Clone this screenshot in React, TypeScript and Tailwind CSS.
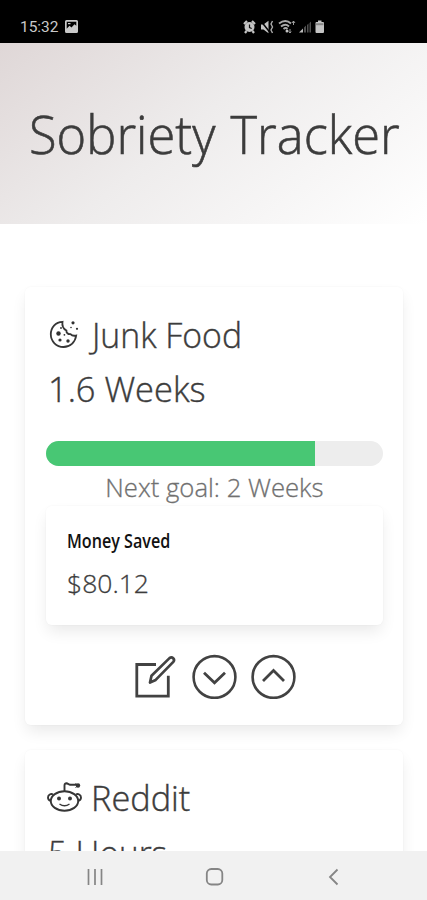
import type { ReactNode } from 'react';

const cardShadow = 'shadow-[0_8px_16px_-2px_rgba(10,10,10,0.09),0_0_0_1px_rgba(10,10,10,0.01)]';

function StatusBar() {
  return (
    <header className="flex h-[43px] shrink-0 bg-black pt-[19px] text-[#c9c9c9]">
      <div className="ml-[20px] w-[39px] whitespace-nowrap font-['Roboto',sans-serif] text-[15px] leading-4">
        <span className="inline-block origin-left scale-x-[1.03]">15:32</span>
      </div>
      <svg className="ml-[6px] mt-[1px] h-[13px] w-[13px]" viewBox="0 0 13 13">
        <path fill="#c9c9c9" fillRule="evenodd" d="M1.500 0h10A1.500 1.500 0 0 1 13 1.500v10a1.500 1.500 0 0 1-1.500 1.500h-10A1.500 1.500 0 0 1 0 11.500v-10A1.500 1.500 0 0 1 1.500 0zM1.700 1.700v7L4.500 5.800l2 1.600 3-3.200 1.800 1.500v-4z" />
        <path fill="#c9c9c9" d="M3 3h2.500v1.200H3z" />
      </svg>
      <svg className="ml-[165px] h-[16px] w-[82px]" viewBox="243 19 82 16" fill="#c4c4c4">
        <circle cx="249.500" cy="27" r="5" />
        <path d="M244 24l3-3M255 24l-3-3M246.500 31l-1.500 2M252.500 31l1.500 2" stroke="#c4c4c4" strokeWidth="2.200" />
        <path d="M249.500 24.500V27.500l2.200 1" stroke="#111" strokeWidth="1.200" fill="none" />
        <path d="M261 24.500h2.500l5-3.800v12.600l-5-3.800H261z" />
        <path d="M260.500 20.500l9.500 12" stroke="#000" strokeWidth="1.500" />
        <path d="M272.500 21l-1.500 3 1.500 3-1.500 3 1.500 3" fill="none" stroke="#aaa" strokeWidth="1.400" />
        <path d="M279 23.500q6.500-5 12 0M281 26.500q4.500-3.500 8 0M283.500 29q2.300-1.800 4 0" fill="none" stroke="#aaa" strokeWidth="1.900" />
        <circle cx="287" cy="31" r="1.500" />
        <path d="M293.500 21v4M292 23l1.500-2 1.500 2M290 29v4M288.800 31.500l1.200 1.500 1.200-1.500" fill="none" stroke="#aaa" strokeWidth=".9" />
        <path d="M299 32.500l4-4v4z" fill="#bbb" />
        <path d="M304 27.500l2-2v7h-2zM307 25l1.500-1.500v9H307zM309.500 23l1.500-1.500v11h-1.500z" fill="#505050" />
        <path d="M318 20.500h3.500V22H323q1 0 1 1v9q0 1-1 1h-6.500q-1 0-1-1v-9q0-1 1-1h1.500z" />
        <path d="M316 23.200h7.500v2H316z" fill="#888" />
      </svg>
    </header>
  );
}

function CookieIcon() {
  return (
    <svg className="mt-[11px] h-8 w-8 shrink-0" viewBox="0 0 32 32" fill="none" stroke="#363636" strokeWidth="1.800">
      <path d="M14.500 2.800C7.500 3 2.800 8.500 2.800 15.300c0 7 5.500 12.700 12.700 12.700 6.500 0 11.800-4.700 12.700-11.500-2 .5-4.300.2-5.700-1.300-2.600.2-4.300-1.400-4.100-3.700-3-1.800-4.600-4.700-3.900-8.700z" />
      <g fill="#303030" stroke="none">
        <circle cx="10.500" cy="14.500" r="2.200" /><circle cx="12" cy="21" r="1.600" />
        <circle cx="20" cy="22" r="1.700" /><circle cx="16.400" cy="15.800" r=".9" />
        <circle cx="13" cy="9" r=".9" /><circle cx="25" cy="3.800" r="1.600" />
        <circle cx="23" cy="8.500" r=".8" /><circle cx="29" cy="9.800" r="1.100" />
      </g>
    </svg>
  );
}

function RedditIcon() {
  return (
    <svg className="mt-[9px] h-8 w-9 shrink-0" viewBox="0 0 36 32" fill="none" stroke="#363636" strokeWidth="1.900">
      <ellipse cx="17.500" cy="21" rx="13.700" ry="9.700" />
      <path d="M6 14.500c-2-1.300-5 .3-5 3 0 1.800 1 3 2.700 3.300M29 14.500c2-1.300 5 .3 5 3 0 1.800-1 3-2.700 3.300" />
      <path d="M17.500 11.300V5.500q0-2.400 2.300-2.200L23 4.800H30" />
      <circle cx="31" cy="5.500" r="2.200" fill="#363636" stroke="none" />
      <path d="M28.500 3.500l2.500 2-2.500 2" strokeWidth="1" />
      <circle cx="12" cy="18.500" r="2" fill="#363636" stroke="none" />
      <circle cx="23" cy="18.500" r="2" fill="#363636" stroke="none" />
      <path d="M12.500 24q5 3.600 10 0" strokeWidth="1.400" />
    </svg>
  );
}

function Card({ children }: { children: ReactNode }) {
  return <article className={`w-[378px] rounded-[6px] bg-white pl-[21px] pr-5 pt-[21px] ${cardShadow}`}>{children}</article>;
}

function Actions() {
  return (
    <div className="mt-[28px] flex pl-[88px]">
      <svg className="h-[45px] w-[44px]" viewBox="134 653 44 45" fill="none" stroke="#424242" strokeWidth="2.800">
        <path d="M156 663.500h-19.200v31.700h31.500v-20.500" />
        <path d="M150 681.500l1.500-6.800 18-17.600q2-1.600 3.700.1t.1 3.700l-17.600 18z" strokeWidth="2.700" strokeLinejoin="round" />
      </svg>
      <svg className="ml-[14px] h-[45px] w-[45px]" viewBox="192 653 45 45" fill="none" stroke="#424242" strokeWidth="2.600">
        <circle cx="214.500" cy="676" r="20.900" />
        <path d="M204 671.800l10.500 10 10.500-10" strokeWidth="2.800" />
      </svg>
      <svg className="ml-[14px] h-[45px] w-[45px]" viewBox="251 653 45 45" fill="none" stroke="#424242" strokeWidth="2.600">
        <circle cx="273.500" cy="676" r="20.900" />
        <path d="M263 680l10.500-10.500L284 680" strokeWidth="2.800" />
      </svg>
    </div>
  );
}

export default function App() {
  return (
    <div className="flex h-[900px] w-[427px] flex-col overflow-hidden bg-white font-['Open_Sans',sans-serif] text-[#3c3c3c]">
      <StatusBar />
      <section className="h-[181px] shrink-0 bg-[linear-gradient(141deg,#dfd7d7_0%,#eeecec_45%,#ffffff_100%)] pl-[29px] pt-[59px]">
        <h1 className="whitespace-nowrap text-[53px] font-light leading-[64px] [-webkit-text-stroke:0.6px_#3c3c3c]">
          <span className="inline-block origin-left scale-x-[0.955] [word-spacing:2px]">Sobriety Tracker</span>
        </h1>
      </section>
      <main className="flex min-h-0 flex-1 flex-col items-center gap-[25px] overflow-hidden pt-[63px]">
        <div className="h-[438px] shrink-0">
          <Card>
            <div className="h-[417px] whitespace-nowrap">
              <div className="flex h-[54px] pl-[2px]">
                <CookieIcon />
                <h2 className="ml-[12px] text-[35px] font-light leading-[53px] [-webkit-text-stroke:0.4px_#3c3c3c]">
                  <span className="inline-block origin-left scale-x-[0.965]">Junk Food</span>
                </h2>
              </div>
              <p className="h-[54px] pl-[2px] text-[35px] font-light leading-[54px] [-webkit-text-stroke:0.4px_#3c3c3c]">
                <span className="inline-block origin-left scale-x-[0.983]">1.6 Weeks</span>
              </p>
              <div className="mt-[25px] h-[25px] overflow-hidden rounded-full bg-[#ededed]">
                <div className="h-full w-4/5 bg-[#48c774]" />
              </div>
              <p className="mt-[3px] text-center text-[26px] font-light leading-9 text-[#707070] [-webkit-text-stroke:0.3px_#707070]">
                <span className="inline-block scale-x-[0.988]">Next goal: 2 Weeks</span>
              </p>
              <section className={`mt-px h-[119px] rounded-[6px] bg-white px-[21px] pt-[20px] ${cardShadow}`}>
                <h3 className="text-[19.500px] font-semibold leading-[30px] text-[#111111]">
                  <span className="inline-block origin-left scale-x-[0.827]">Money Saved</span>
                </h3>
                <p className="mt-[7px] text-[26px] font-light leading-10 [-webkit-text-stroke:0.3px_#3c3c3c]">
                  <span className="inline-block origin-left scale-x-[1.02]">$80.12</span>
                </p>
              </section>
              <div className="pt-px">
                <Actions />
              </div>
            </div>
          </Card>
        </div>
        <div className="h-[160px] shrink-0">
          <Card>
            <div className="h-[139px] whitespace-nowrap">
              <div className="flex h-[54px] pl-px">
                <RedditIcon />
                <h2 className="ml-[8px] text-[35px] font-light leading-[53px] [-webkit-text-stroke:0.4px_#3c3c3c]">
                  <span className="inline-block origin-left scale-x-[0.98]">Reddit</span>
                </h2>
              </div>
              <p className="h-[54px] pl-[2px] text-[35px] font-light leading-[55px] [-webkit-text-stroke:0.4px_#3c3c3c]">
                <span className="inline-block origin-left scale-x-[0.95]">5 Hours</span>
              </p>
            </div>
          </Card>
        </div>
      </main>
      <nav className="flex h-[49px] shrink-0 items-center bg-[#f1f1f1] pl-[86px] pt-[3px]">
        <svg className="h-5 w-[18px]" viewBox="0 0 18 20" stroke="#858585" strokeWidth="1.700"><path d="M2.500 2v16M9 2v16M15.500 2v16" /></svg>
        <svg className="ml-[101px] h-5 w-5" viewBox="0 0 20 20" fill="none" stroke="#858585" strokeWidth="1.800"><rect x="1.800" y="2" width="15.500" height="15.500" rx="4.500" /></svg>
        <svg className="ml-[102px] h-5 w-[14px]" viewBox="0 0 14 20" fill="none" stroke="#858585" strokeWidth="1.800"><path d="M10.500 2.500L3 10l7.500 7.500" /></svg>
      </nav>
    </div>
  );
}
